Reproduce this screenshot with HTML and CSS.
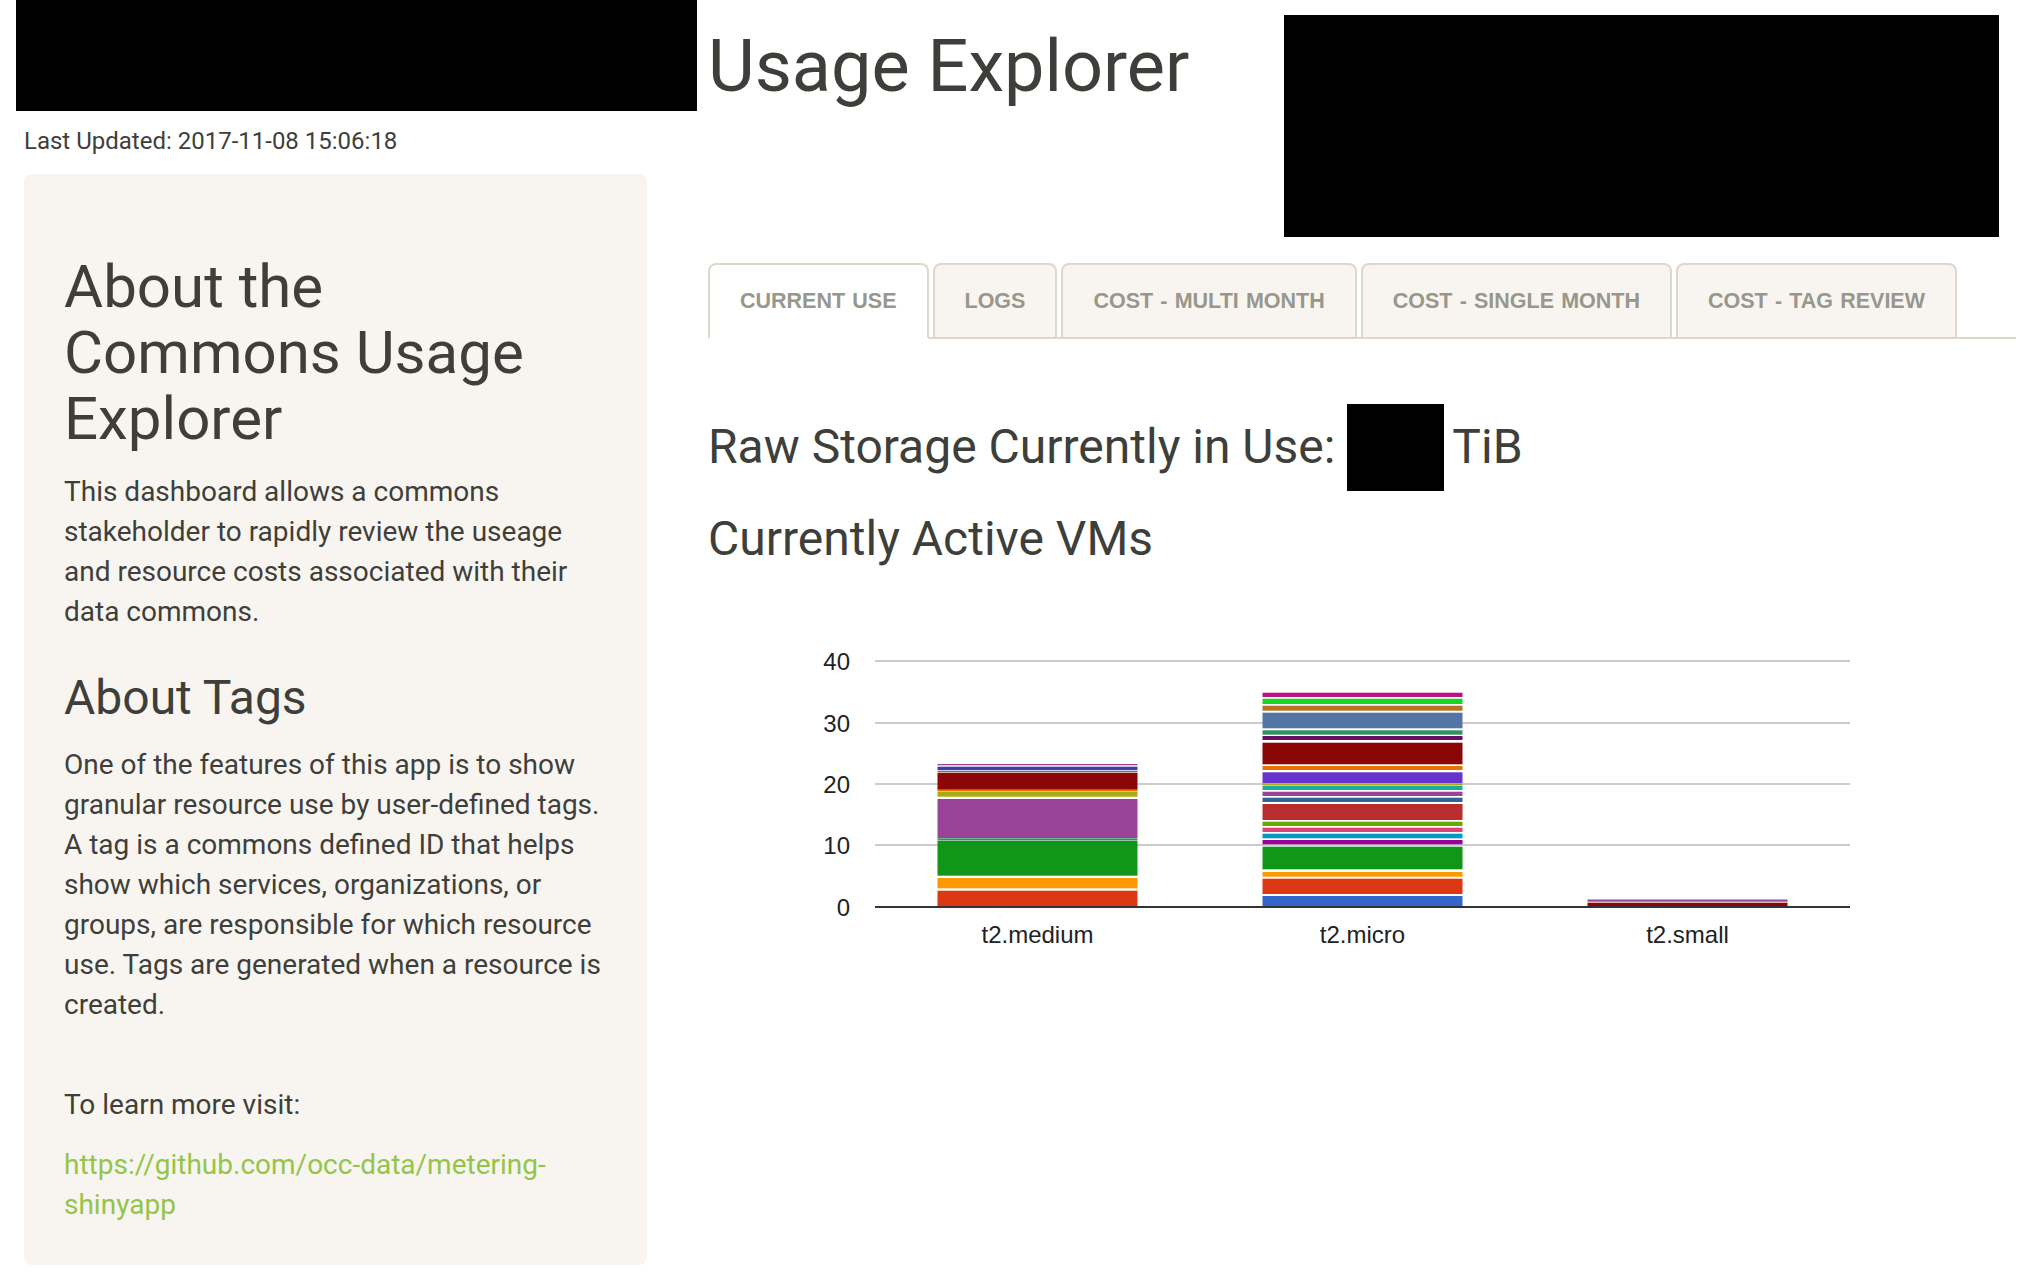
FILE: index.html
```html
<!DOCTYPE html>
<html lang="en">
<head>
<meta charset="utf-8">
<title>Usage Explorer</title>
<link rel="stylesheet" href="styles.css">
</head>
<body>
<div class="page">
  <aside class="side">
    <div class="logo-left"></div>
    <p class="updated">Last Updated: 2017-11-08 15:06:18</p>
    <div class="well">
      <h2>About the Commons Usage Explorer</h2>
      <p>This dashboard allows a commons stakeholder to rapidly review the useage and resource costs associated with their data commons.</p>
      <h3>About Tags</h3>
      <p>One of the features of this app is to show granular resource use by user-defined tags. A tag is a commons defined ID that helps show which services, organizations, or groups, are responsible for which resource use. Tags are generated when a resource is created.</p>
      <br>
      <p>To learn more visit:</p>
      <p class="last"><a class="link" href="#">https://github.com/occ-data/metering-<br>shinyapp</a></p>
    </div>
  </aside>
  <main class="main">
    <header class="head">
      <h1 class="title">Usage Explorer</h1>
      <div class="logo-right"></div>
    </header>
    <ul class="tabs">
      <li class="tab active"><a href="#">Current Use</a></li>
      <li class="tab"><a href="#">Logs</a></li>
      <li class="tab"><a href="#">Cost - Multi Month</a></li>
      <li class="tab"><a href="#">Cost - Single Month</a></li>
      <li class="tab"><a href="#">Cost - Tag Review</a></li>
    </ul>
    <h3 class="storage"><span>Raw Storage Currently in Use:</span><span class="redact"></span><span>TiB</span></h3>
    <h3 class="vms">Currently Active VMs</h3>
    <svg class="chart" width="1308" height="370" viewBox="0 0 1308 370">
      <g class="grid">
        <line x1="167" y1="61" x2="1142" y2="61"/>
        <line x1="167" y1="123" x2="1142" y2="123"/>
        <line x1="167" y1="184" x2="1142" y2="184"/>
        <line x1="167" y1="245" x2="1142" y2="245"/>
      </g>
      <g class="ylabels">
        <text x="142" y="69.6">40</text>
        <text x="142" y="131.6">30</text>
        <text x="142" y="192.6">20</text>
        <text x="142" y="253.6">10</text>
        <text x="142" y="315.6">0</text>
      </g>
      <g class="bar">
        <rect x="229.5" y="290.7" width="200" height="15.3" fill="#dc3912"/>
        <rect x="229.5" y="278" width="200" height="10.3" fill="#ff9900"/>
        <rect x="229.5" y="240.7" width="200" height="35" fill="#109618"/>
        <rect x="229.5" y="238.3" width="200" height="2" fill="#329262"/>
        <rect x="229.5" y="199" width="200" height="39" fill="#994499"/>
        <rect x="229.5" y="191.7" width="200" height="5" fill="#aaaa11"/>
        <rect x="229.5" y="190" width="200" height="1.3" fill="#e67300"/>
        <rect x="229.5" y="172.7" width="200" height="17" fill="#8b0707"/>
        <rect x="229.5" y="170.7" width="200" height="1.3" fill="#5574a6"/>
        <rect x="229.5" y="166.7" width="200" height="3.3" fill="#3b3eac"/>
        <rect x="229.5" y="164" width="200" height="1.3" fill="#994499"/>
      </g>
      <g class="bar">
        <rect x="554.5" y="296" width="200" height="10" fill="#3366cc"/>
        <rect x="554.5" y="278.7" width="200" height="15.3" fill="#dc3912"/>
        <rect x="554.5" y="272" width="200" height="4.7" fill="#ff9900"/>
        <rect x="554.5" y="246.7" width="200" height="22.6" fill="#109618"/>
        <rect x="554.5" y="240" width="200" height="4.3" fill="#990099"/>
        <rect x="554.5" y="233.7" width="200" height="4.6" fill="#0099c6"/>
        <rect x="554.5" y="227.7" width="200" height="4.3" fill="#dd4477"/>
        <rect x="554.5" y="221.7" width="200" height="4.3" fill="#66aa00"/>
        <rect x="554.5" y="204" width="200" height="16" fill="#b82e2e"/>
        <rect x="554.5" y="197.7" width="200" height="4.3" fill="#316395"/>
        <rect x="554.5" y="191.7" width="200" height="4.3" fill="#994499"/>
        <rect x="554.5" y="185.7" width="200" height="4.3" fill="#22aa99"/>
        <rect x="554.5" y="184" width="200" height="1.3" fill="#aaaa11"/>
        <rect x="554.5" y="172.3" width="200" height="11" fill="#6633cc"/>
        <rect x="554.5" y="166" width="200" height="4" fill="#e67300"/>
        <rect x="554.5" y="142.7" width="200" height="21.6" fill="#8b0707"/>
        <rect x="554.5" y="136" width="200" height="4" fill="#651067"/>
        <rect x="554.5" y="130.3" width="200" height="4.4" fill="#329262"/>
        <rect x="554.5" y="112.7" width="200" height="15.6" fill="#5574a6"/>
        <rect x="554.5" y="105.7" width="200" height="5" fill="#b77322"/>
        <rect x="554.5" y="98.7" width="200" height="5.3" fill="#16d620"/>
        <rect x="554.5" y="92.7" width="200" height="4.3" fill="#b91383"/>
      </g>
      <g class="bar">
        <rect x="879.5" y="302.7" width="200" height="3.3" fill="#8b0707"/>
        <rect x="879.5" y="299.5" width="200" height="2.2" fill="#994499"/>
      </g>
      <line class="axis" x1="167" y1="307" x2="1142" y2="307"/>
      <g class="xlabels">
        <text x="329.5" y="342.6">t2.medium</text>
        <text x="654.5" y="342.6">t2.micro</text>
        <text x="979.5" y="342.6">t2.small</text>
      </g>
    </svg>
  </main>
</div>
</body>
</html>
```
FILE: styles.css
```css
html, body {
  margin: 0;
  padding: 0;
  background: #ffffff;
}

body {
  font-family: "Roboto", "Helvetica Neue", Arial, sans-serif;
  font-size: 28px;
  line-height: 40px;
  color: #3e3f3a;
}

.page {
  display: grid;
  grid-template-columns: 692px 1308px;
  padding-left: 16px;
}

/* ---------- left column ---------- */
.side {
  display: flex;
  flex-direction: column;
}

.logo-left {
  width: 681px;
  height: 111px;
  background: #000;
}

.updated {
  margin: 13px 0 0;
  padding-left: 8px;
  font-size: 24px;
  line-height: 34px;
}

.well {
  box-sizing: border-box;
  width: 623px;
  margin: 16px 0 0 8px;
  padding: 40px;
  background: #f8f5f0;
  border-radius: 8px;
}

.well h2 {
  margin: 40px 0 20px;
  font-size: 60px;
  line-height: 66px;
  font-weight: 400;
}

.well h3 {
  margin: 40px 0 20px;
  font-size: 48px;
  line-height: 52.8px;
  font-weight: 400;
}

.well p {
  margin: 0 0 20px;
}

.well p.last {
  margin-bottom: 0;
}

.link {
  color: #93c54b;
  text-decoration: none;
}

/* ---------- main column ---------- */
.head {
  display: flex;
  align-items: flex-start;
  height: 237px;
}

.title {
  margin: 27px 0 0;
  font-size: 72px;
  line-height: 79.2px;
  font-weight: 400;
}

.logo-right {
  width: 715px;
  height: 222px;
  margin: 15px 17px 0 auto;
  background: #000;
}

.tabs {
  display: flex;
  margin: 26px 0 0;
  padding: 0;
  list-style: none;
  border-bottom: 2px solid #dfd7ca;
}

.tab {
  margin: 0 4px -2px 0;
}

.tab a {
  display: block;
  padding: 16px 30px;
  line-height: 40px;
  border: 2px solid #dfd7ca;
  border-radius: 8px 8px 0 0;
  background: #f8f5f0;
  color: #98978b;
  font-family: "Liberation Sans", Arial, sans-serif;
  font-weight: 700;
  font-size: 21.5px;
  word-spacing: 1.2px;
  text-transform: uppercase;
  text-decoration: none;
}

.tab.active a {
  background: #ffffff;
  border-bottom-color: #ffffff;
}

.storage {
  display: flex;
  align-items: center;
  margin: 65px 0 0;
  font-size: 48px;
  line-height: 52.8px;
  font-weight: 400;
}

.redact {
  width: 97px;
  height: 87px;
  margin: 0 8px 0 12px;
  background: #000;
}

.vms {
  margin: 22px 0 0;
  font-size: 48px;
  line-height: 52.8px;
  font-weight: 400;
}

.chart {
  display: block;
  margin-top: 34px;
}

.chart .grid line {
  stroke: #cccccc;
  stroke-width: 2;
}

.chart .axis {
  stroke: #333333;
  stroke-width: 2;
}

.chart text {
  font-family: "Liberation Sans", Arial, sans-serif;
  font-size: 24px;
  fill: #222222;
}

.chart .ylabels text {
  text-anchor: end;
}

.chart .xlabels text {
  text-anchor: middle;
}
```
